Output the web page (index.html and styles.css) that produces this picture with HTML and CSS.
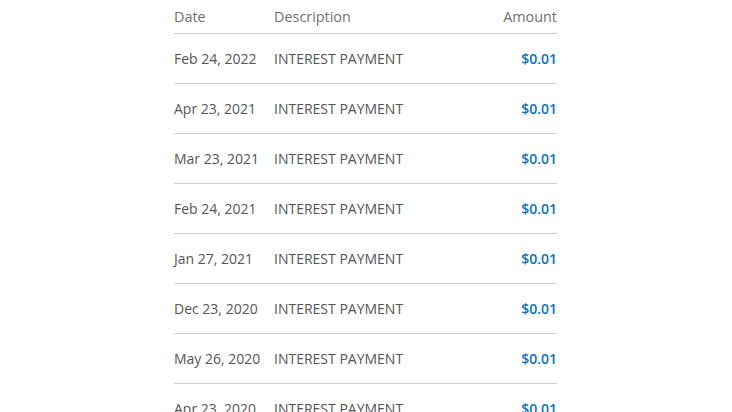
FILE: index.html
```html
<!DOCTYPE html>
<html>
<head>
<meta charset="utf-8">
<link rel="stylesheet" href="styles.css">
</head>
<body>
<div class="table">
  <div class="row head">
    <div class="date">Date</div>
    <div class="desc">Description</div>
    <div class="amt">Amount</div>
  </div>
  <div class="row"><div class="date">Feb 24, 2022</div><div class="desc">INTEREST PAYMENT</div><div class="amt">$0.01</div></div>
  <div class="row"><div class="date">Apr 23, 2021</div><div class="desc">INTEREST PAYMENT</div><div class="amt">$0.01</div></div>
  <div class="row"><div class="date">Mar 23, 2021</div><div class="desc">INTEREST PAYMENT</div><div class="amt">$0.01</div></div>
  <div class="row"><div class="date">Feb 24, 2021</div><div class="desc">INTEREST PAYMENT</div><div class="amt">$0.01</div></div>
  <div class="row"><div class="date">Jan 27, 2021</div><div class="desc">INTEREST PAYMENT</div><div class="amt">$0.01</div></div>
  <div class="row"><div class="date">Dec 23, 2020</div><div class="desc">INTEREST PAYMENT</div><div class="amt">$0.01</div></div>
  <div class="row"><div class="date">May 26, 2020</div><div class="desc">INTEREST PAYMENT</div><div class="amt">$0.01</div></div>
  <div class="row"><div class="date">Apr 23, 2020</div><div class="desc">INTEREST PAYMENT</div><div class="amt">$0.01</div></div>
</div>
</body>
</html>
```
FILE: styles.css
```css
html, body {
  margin: 0;
  padding: 0;
  background: #fff;
  overflow: hidden;
}
body {
  font-family: "Open Sans", "Noto Sans", sans-serif;
  font-size: 14px;
  color: #555;
}
.table {
  width: 383px;
  margin-left: 174px;
}
.row {
  display: flex;
  align-items: center;
  height: 49px;
  border-bottom: 1px solid #cfcfcf;
}
.row.head {
  height: 33px;
  color: #707070;
  font-size: 14.4px;
}
.date {
  width: 100px;
}
.desc {
  flex: 1;
}
.amt {
  text-align: right;
  color: #0b72c0;
  font-weight: 600;
}
.head .amt {
  color: #707070;
  font-weight: 400;
}
```
